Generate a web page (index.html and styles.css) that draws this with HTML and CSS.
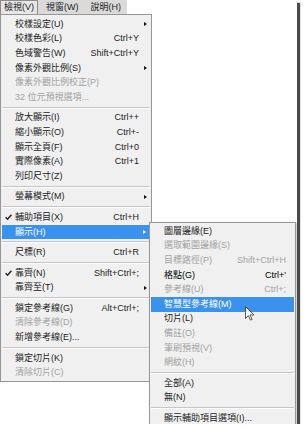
FILE: index.html
```html
<!DOCTYPE html>
<html lang="zh-Hant">
<head>
<meta charset="utf-8">
<title>檢視選單</title>
<link rel="stylesheet" href="styles.css">
</head>
<body>
<div class="screen">
  <div class="menubar">
    <span class="mb-item open">檢視(V)</span>
    <span class="mb-item">視窗(W)</span>
    <span class="mb-item">說明(H)</span>
  </div>

  <div class="menu main">
    <div class="item"><span class="check"></span><span class="label">校樣設定(U)</span><span class="key"></span><span class="arrow has"></span></div>
    <div class="item"><span class="check"></span><span class="label">校樣色彩(L)</span><span class="key">Ctrl+Y</span><span class="arrow"></span></div>
    <div class="item"><span class="check"></span><span class="label">色域警告(W)</span><span class="key">Shift+Ctrl+Y</span><span class="arrow"></span></div>
    <div class="item"><span class="check"></span><span class="label">像素外觀比例(S)</span><span class="key"></span><span class="arrow has"></span></div>
    <div class="item off"><span class="check"></span><span class="label">像素外觀比例校正(P)</span><span class="key"></span><span class="arrow"></span></div>
    <div class="item off"><span class="check"></span><span class="label">32 位元預視選項...</span><span class="key"></span><span class="arrow"></span></div>
    <div class="sep"></div>
    <div class="item"><span class="check"></span><span class="label">放大顯示(I)</span><span class="key">Ctrl++</span><span class="arrow"></span></div>
    <div class="item"><span class="check"></span><span class="label">縮小顯示(O)</span><span class="key">Ctrl+-</span><span class="arrow"></span></div>
    <div class="item"><span class="check"></span><span class="label">顯示全頁(F)</span><span class="key">Ctrl+0</span><span class="arrow"></span></div>
    <div class="item"><span class="check"></span><span class="label">實際像素(A)</span><span class="key">Ctrl+1</span><span class="arrow"></span></div>
    <div class="item"><span class="check"></span><span class="label">列印尺寸(Z)</span><span class="key"></span><span class="arrow"></span></div>
    <div class="sep"></div>
    <div class="item"><span class="check"></span><span class="label">螢幕模式(M)</span><span class="key"></span><span class="arrow has"></span></div>
    <div class="sep"></div>
    <div class="item"><span class="check on"><svg viewBox="0 0 7 6" width="7" height="6"><path d="M0.6 3.2 L2.6 5.2 L6.4 0.8" fill="none" stroke="#1e1e1e" stroke-width="1.4"/></svg></span><span class="label">輔助項目(X)</span><span class="key">Ctrl+H</span><span class="arrow"></span></div>
    <div class="item hl"><span class="check"></span><span class="label">顯示(H)</span><span class="key"></span><span class="arrow has"></span></div>
    <div class="sep"></div>
    <div class="item"><span class="check"></span><span class="label">尺標(R)</span><span class="key">Ctrl+R</span><span class="arrow"></span></div>
    <div class="sep"></div>
    <div class="item"><span class="check on"><svg viewBox="0 0 7 6" width="7" height="6"><path d="M0.6 3.2 L2.6 5.2 L6.4 0.8" fill="none" stroke="#1e1e1e" stroke-width="1.4"/></svg></span><span class="label">靠齊(N)</span><span class="key">Shift+Ctrl+;</span><span class="arrow"></span></div>
    <div class="item"><span class="check"></span><span class="label">靠齊至(T)</span><span class="key"></span><span class="arrow has"></span></div>
    <div class="sep"></div>
    <div class="item"><span class="check"></span><span class="label">鎖定參考線(G)</span><span class="key">Alt+Ctrl+;</span><span class="arrow"></span></div>
    <div class="item off"><span class="check"></span><span class="label">清除參考線(D)</span><span class="key"></span><span class="arrow"></span></div>
    <div class="item"><span class="check"></span><span class="label">新增參考線(E)...</span><span class="key"></span><span class="arrow"></span></div>
    <div class="sep"></div>
    <div class="item"><span class="check"></span><span class="label">鎖定切片(K)</span><span class="key"></span><span class="arrow"></span></div>
    <div class="item off"><span class="check"></span><span class="label">清除切片(C)</span><span class="key"></span><span class="arrow"></span></div>
  </div>

  <div class="menu sub">
    <div class="item"><span class="check"></span><span class="label">圖層邊緣(E)</span><span class="key"></span><span class="arrow"></span></div>
    <div class="item off"><span class="check"></span><span class="label">選取範圍邊緣(S)</span><span class="key"></span><span class="arrow"></span></div>
    <div class="item off"><span class="check"></span><span class="label">目標路徑(P)</span><span class="key">Shift+Ctrl+H</span><span class="arrow"></span></div>
    <div class="item strong"><span class="check"></span><span class="label">格點(G)</span><span class="key">Ctrl+'</span><span class="arrow"></span></div>
    <div class="item off"><span class="check"></span><span class="label">參考線(U)</span><span class="key">Ctrl+;</span><span class="arrow"></span></div>
    <div class="item hl"><span class="check"></span><span class="label">智慧型參考線(M)</span><span class="key"></span><span class="arrow"></span></div>
    <div class="item"><span class="check"></span><span class="label">切片(L)</span><span class="key"></span><span class="arrow"></span></div>
    <div class="item off"><span class="check"></span><span class="label">備註(O)</span><span class="key"></span><span class="arrow"></span></div>
    <div class="item off"><span class="check"></span><span class="label">筆刷預視(V)</span><span class="key"></span><span class="arrow"></span></div>
    <div class="item off"><span class="check"></span><span class="label">網紋(H)</span><span class="key"></span><span class="arrow"></span></div>
    <div class="sep"></div>
    <div class="item"><span class="check"></span><span class="label">全部(A)</span><span class="key"></span><span class="arrow"></span></div>
    <div class="item"><span class="check"></span><span class="label">無(N)</span><span class="key"></span><span class="arrow"></span></div>
    <div class="sep"></div>
    <div class="item"><span class="check"></span><span class="label">顯示輔助項目選項(I)...</span><span class="key"></span><span class="arrow"></span></div>
  </div>

  <svg class="cursor" viewBox="0 0 12 18" width="10" height="15">
    <path d="M0.6 0.6 L0.6 15 L4 11.6 L6.6 17 L8.6 16 L6 10.8 L10.8 10.8 Z" fill="#fbfbfb" stroke="#3a3a3a" stroke-width="1"/>
  </svg>
</div>
</body>
</html>
```

FILE: styles.css
```css
html, body {
  margin: 0;
  padding: 0;
  background: #ffffff;
}

body {
  font-family: "Liberation Sans", "Noto Sans CJK TC", sans-serif;
  font-size: 9px;
  color: #222222;
}

.screen {
  position: relative;
  width: 297px;
  height: 424px;
  background: #ffffff;
  overflow: hidden;
  box-shadow: 3px 3px 1px #4a4a4a;
}

/* menu bar */
.menubar {
  display: flex;
  gap: 4px;
  width: 127px;
  height: 14px;
  background: #dadada;
  box-sizing: border-box;
}

.mb-item {
  display: flex;
  align-items: center;
  padding: 0 4px;
  height: 14px;
  box-sizing: border-box;
  line-height: 1;
  white-space: nowrap;
}

.mb-item.open {
  border: 1px solid #8a8a8a;
  border-bottom: none;
  padding: 0 3px;
  background: #e6e6e6;
}

/* menus */
.menu {
  background: #f0f0f0;
  border: 1px solid #979797;
  box-sizing: border-box;
}

.main {
  width: 152px;
  padding: 2px 0 1px;
}

.sub {
  position: absolute;
  left: 149px;
  top: 222px;
  width: 147px;
  padding: 1px 0 1px;
  box-shadow: 1px 1px 2px rgba(0, 0, 0, 0.25);
}

.item {
  display: flex;
  align-items: center;
  height: 14.6px;
  line-height: 1;
  white-space: nowrap;
  color: #222222;
}

.item.off {
  color: #a2a2a2;
}

.item.strong {
  color: #000000;
}

.item.hl {
  background: #3b92ee;
  color: #ffffff;
  margin: 0 1px;
}

.check {
  width: 14px;
  flex: none;
  display: flex;
  justify-content: center;
  align-items: center;
  padding-left: 1px;
  box-sizing: border-box;
}

.item.hl .check {
  width: 13px;
}

.label {
  flex: 1;
}

.key {
  flex: none;
}

.arrow {
  flex: none;
  width: 12px;
  display: flex;
  justify-content: center;
  align-items: center;
}

.item.hl .arrow {
  width: 11px;
}

.sub .arrow {
  width: 9px;
}

.arrow.has::before {
  content: "";
  display: block;
  width: 0;
  height: 0;
  border-top: 2.5px solid transparent;
  border-bottom: 2.5px solid transparent;
  border-left: 3px solid #111111;
}

.item.hl .arrow.has::before {
  border-left-color: #ffffff;
}

.sep {
  height: 6px;
  display: flex;
  align-items: center;
}

.sep::before {
  content: "";
  display: block;
  flex: 1;
  height: 0;
  margin: 0 1px;
  border-top: 1px solid #c6c6c6;
  border-bottom: 1px solid #ffffff;
}

.cursor {
  position: absolute;
  left: 245px;
  top: 306px;
}
```
